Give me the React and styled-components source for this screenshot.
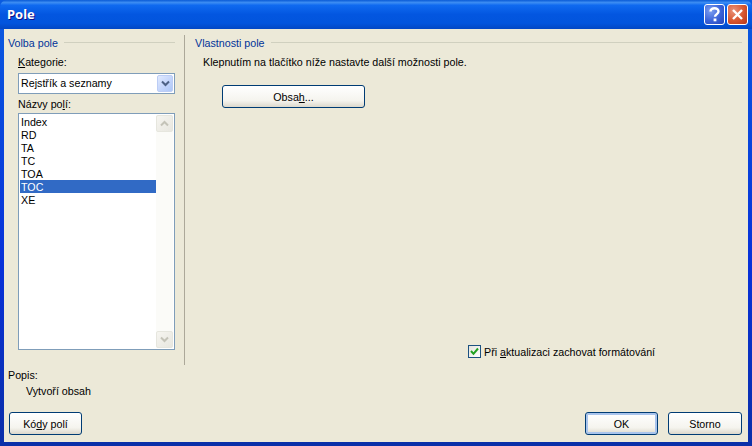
import React from "react";
import styled, { createGlobalStyle } from "styled-components";

const GlobalStyle = createGlobalStyle`
  html, body {
    margin: 0;
    padding: 0;
    background: #ece9d8;
  }
  * {
    box-sizing: border-box;
  }
`;

const Window = styled.div`
  width: 752px;
  height: 446px;
  display: flex;
  flex-direction: column;
  overflow: hidden;
  background: linear-gradient(180deg, #0a5be0 0%, #0831d9 60%, #0a2fa8 100%);
  font-family: "Liberation Sans", Arial, sans-serif;
  font-size: 10.7px;
  color: #000;
`;

const TitleBar = styled.div`
  height: 29px;
  flex: none;
  display: flex;
  align-items: center;
  justify-content: space-between;
  padding: 0 4px 1px 7px;
  border-radius: 7px 7px 0 0;
  background: linear-gradient(
    180deg,
    #0a5bd6 0%,
    #3c8df3 9%,
    #0f6af0 18%,
    #0356e0 50%,
    #0255dd 80%,
    #0247c4 100%
  );
`;

const Title = styled.span`
  font-family: "Noto Sans", sans-serif;
  font-weight: 700;
  font-size: 13px;
  color: #fff;
  text-shadow: 1px 1px 0 #0f1089;
`;

const Caption = styled.div`
  display: flex;
  gap: 2px;
  margin-top: 1px;
`;

const CaptionButton = styled.div`
  width: 21px;
  height: 21px;
  display: flex;
  align-items: center;
  justify-content: center;
  border: 1px solid #fff;
  border-radius: 3px;
  background: ${(p) =>
    p.$close
      ? "radial-gradient(circle at 30% 30%, #e9937a 0%, #d8562f 55%, #b3351a 100%)"
      : "radial-gradient(circle at 30% 30%, #7d9ff0 0%, #3a62d8 55%, #2444b8 100%)"};
`;

const Frame = styled.div`
  flex: 1;
  min-height: 0;
  margin: 0 4px 4px 4px;
  display: flex;
  flex-direction: column;
  background: #ece9d8;
  padding: 6px 6px 7px 4px;
`;

const Columns = styled.div`
  height: 330px;
  flex: none;
  display: flex;
`;

const LeftColumn = styled.div`
  width: 177px;
  flex: none;
  display: flex;
  flex-direction: column;
  padding-right: 9px;
  border-right: 1px solid #aca899;
`;

const RightColumn = styled.div`
  flex: 1;
  display: flex;
  flex-direction: column;
  padding-left: 10px;
`;

const GroupHeading = styled.div`
  display: flex;
  align-items: center;
  gap: 6px;
  height: 15px;
  color: #003399;
  &::after {
    content: "";
    flex: 1;
    height: 1px;
    background: #d0d0bf;
  }
`;

const FieldGroup = styled.div`
  display: flex;
  flex-direction: column;
  padding-left: 10px;
`;

const FieldLabel = styled.label`
  height: 15px;
  line-height: 15px;
  margin-top: ${(p) => p.$top}px;
  margin-bottom: ${(p) => p.$bottom}px;
`;

const Select = styled.div`
  height: 21px;
  display: flex;
  align-items: center;
  justify-content: space-between;
  padding: 0 1px 1px 2px;
  background: #fff;
  border: 1px solid #7f9db9;
`;

const DropButton = styled.div`
  width: 16px;
  height: 17px;
  margin-bottom: -1px;
  display: flex;
  align-items: center;
  justify-content: center;
  border-radius: 2px;
  border: 1px solid #bccdf5;
  background: linear-gradient(135deg, #e1eafe 0%, #c1d3fb 60%, #aec8f7 100%);
`;

const ListBox = styled.div`
  height: 237px;
  display: flex;
  background: #fff;
  border: 1px solid #7f9db9;
  padding: 1px;
`;

const Items = styled.ul`
  flex: 1;
  list-style: none;
  margin: 0;
  padding: 0;
`;

const Item = styled.li`
  height: 13px;
  line-height: 13px;
  padding: 1px 0 0 1px;
  background: ${(p) => (p.$selected ? "#316ac5" : "transparent")};
  color: ${(p) => (p.$selected ? "#fff" : "#000")};
`;

const ScrollBar = styled.div`
  width: 17px;
  flex: none;
  display: flex;
  flex-direction: column;
  justify-content: space-between;
  background: #fbfbf8;
`;

const ScrollArrow = styled.div`
  height: 17px;
  display: flex;
  align-items: center;
  justify-content: center;
  border: 1px solid #e6e6de;
  border-radius: 2px;
  background: linear-gradient(135deg, #f6f5f0 0%, #e8e7e0 100%);
`;

const Hint = styled.p`
  margin: 5px 0 0 8px;
  height: 15px;
  line-height: 15px;
`;

const Button = styled.button`
  width: ${(p) => p.$width}px;
  height: 23px;
  padding: 0;
  flex: none;
  font: inherit;
  color: #000;
  border: 1px solid #003c74;
  border-radius: 3px;
  background: linear-gradient(180deg, #fff 0%, #f5f4ee 70%, #dcd8cc 100%);
  box-shadow: ${(p) => (p.$default ? "inset 0 0 0 2px #a9c4ec" : "none")};
`;

const ContentButton = styled(Button)`
  margin: 15px 0 0 27px;
`;

const CheckRow = styled.label`
  margin-top: auto;
  margin-bottom: 6px;
  margin-left: 273px;
  display: flex;
  align-items: center;
  gap: 3px;
  height: 15px;
`;

const CheckBox = styled.span`
  width: 13px;
  height: 13px;
  display: flex;
  align-items: center;
  justify-content: center;
  background: linear-gradient(135deg, #e4e3dc 0%, #fff 100%);
  border: 1px solid #1c5180;
`;

const Description = styled.div`
  margin-top: 3px;
  display: flex;
  flex-direction: column;
  gap: 1px;
`;

const DescriptionText = styled.div`
  height: 15px;
  line-height: 15px;
  padding-left: ${(p) => p.$indent || 0}px;
`;

const Footer = styled.div`
  margin-top: auto;
  display: flex;
  align-items: center;
  padding-left: 1px;
`;

const FooterActions = styled.div`
  margin-left: auto;
  display: flex;
  gap: 10px;
`;

const fields = ["Index", "RD", "TA", "TC", "TOA", "TOC", "XE"];

const Arrow = ({ color, up }) => (
  <svg width="9" height="7" viewBox="0 0 9 7">
    <path
      d={up ? "M1 5.5 L4.5 2 L8 5.5" : "M1 1.5 L4.5 5 L8 1.5"}
      fill="none"
      stroke={color}
      strokeWidth="2"
    />
  </svg>
);

export default function App() {
  return (
    <>
      <GlobalStyle />
      <Window>
        <TitleBar>
          <Title>Pole</Title>
          <Caption>
            <CaptionButton>
              <svg width="13" height="15" viewBox="0 0 13 15">
                <path
                  d="M2.5 4.5 C2.5 2 4.5 1.2 6.5 1.2 C9 1.2 10.5 2.6 10.5 4.5 C10.5 7 7 7.2 7 9.8"
                  fill="none"
                  stroke="#fff"
                  strokeWidth="2.4"
                />
                <rect x="5.6" y="11.5" width="2.8" height="2.8" fill="#fff" />
              </svg>
            </CaptionButton>
            <CaptionButton $close>
              <svg width="13" height="13" viewBox="0 0 13 13">
                <path
                  d="M2 2 L11 11 M11 2 L2 11"
                  stroke="#fff"
                  strokeWidth="2.4"
                />
              </svg>
            </CaptionButton>
          </Caption>
        </TitleBar>
        <Frame>
          <Columns>
            <LeftColumn>
              <GroupHeading>Volba pole</GroupHeading>
              <FieldGroup>
                <FieldLabel $top={5} $bottom={3}>
                  <u>K</u>ategorie:
                </FieldLabel>
                <Select>
                  Rejstřík a seznamy
                  <DropButton>
                    <Arrow color="#4d6185" />
                  </DropButton>
                </Select>
                <FieldLabel $top={3} $bottom={1}>
                  Názvy po<u>l</u>í:
                </FieldLabel>
                <ListBox>
                  <Items>
                    {fields.map((name) => (
                      <Item key={name} $selected={name === "TOC"}>
                        {name}
                      </Item>
                    ))}
                  </Items>
                  <ScrollBar>
                    <ScrollArrow>
                      <Arrow color="#c4c3b8" up />
                    </ScrollArrow>
                    <ScrollArrow>
                      <Arrow color="#c4c3b8" />
                    </ScrollArrow>
                  </ScrollBar>
                </ListBox>
              </FieldGroup>
            </LeftColumn>
            <RightColumn>
              <GroupHeading>Vlastnosti pole</GroupHeading>
              <Hint>Klepnutím na tlačítko níže nastavte další možnosti pole.</Hint>
              <ContentButton $width={143}>
                Obsa<u>h</u>...
              </ContentButton>
              <CheckRow>
                <CheckBox>
                  <svg width="11" height="11" viewBox="0 0 11 11">
                    <path
                      d="M2 5 L4.5 7.8 L9 2.5"
                      fill="none"
                      stroke="#21a121"
                      strokeWidth="2"
                    />
                  </svg>
                </CheckBox>
                <span>
                  Při <u>a</u>ktualizaci zachovat formátování
                </span>
              </CheckRow>
            </RightColumn>
          </Columns>
          <Description>
            <DescriptionText>Popis:</DescriptionText>
            <DescriptionText $indent={18}>Vytvoří obsah</DescriptionText>
          </Description>
          <Footer>
            <Button $width={73}>
              Kó<u>d</u>y polí
            </Button>
            <FooterActions>
              <Button $width={73} $default>
                OK
              </Button>
              <Button $width={74}>Storno</Button>
            </FooterActions>
          </Footer>
        </Frame>
      </Window>
    </>
  );
}
